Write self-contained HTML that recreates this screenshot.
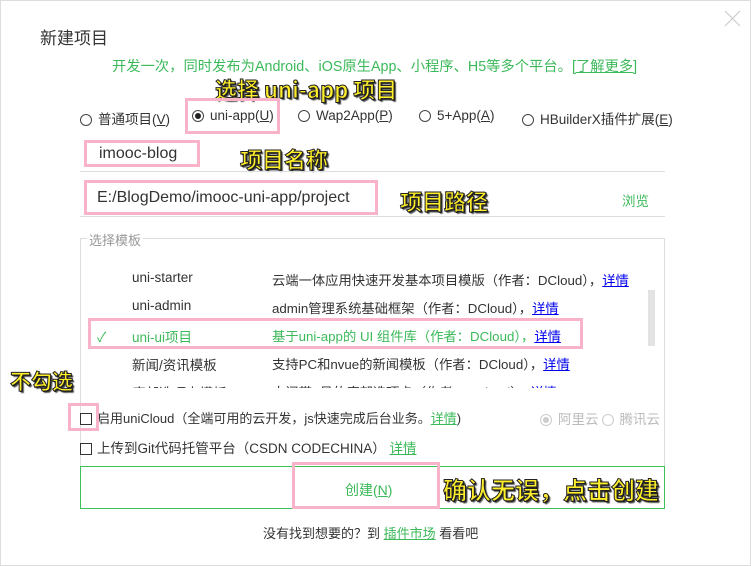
<!DOCTYPE html>
<html><head><meta charset="utf-8"><style>
*{margin:0;padding:0;box-sizing:border-box}
body{width:751px;height:566px;background:#fff;position:relative;overflow:hidden;font-family:"Liberation Sans","Noto Sans CJK SC",sans-serif;color:#333;font-size:13px}
.a{position:absolute;white-space:nowrap}
.g{color:#3cb95a}
.pk{position:absolute;border:3px solid #f9b3c8}
.y{position:absolute;white-space:nowrap;font-weight:bold;color:#ffef2a;font-family:"WenQuanYi Zen Hei","Noto Sans CJK SC",sans-serif;-webkit-text-stroke:1px #222;text-shadow:1px 1px 0 #222,2px 2px 1px #555}
.r{display:inline-block;width:12px;height:12px;border:1px solid #444;border-radius:50%;vertical-align:-2px;margin-right:6px;position:relative}
.cb{display:inline-block;width:12px;height:12px;border:1px solid #333;vertical-align:-2px;margin-right:5px}
u{text-decoration:underline}
.bl{color:#00e;text-decoration:underline}
</style></head><body>
<div style="position:absolute;inset:0;border:1px solid #ddd"></div>
<svg class="a" style="left:724px;top:10px" width="17" height="17"><path d="M1 1L16 16M16 1L1 16" stroke="#ccc" stroke-width="1.2"/></svg>
<div class="a" style="left:40px;top:24px;font-size:17px;color:#333">新建项目</div>
<div class="a g" style="left:112px;top:55px;font-size:14.3px">开发一次，同时发布为Android、iOS原生App、小程序、H5等多个平台。<u>[了解更多]</u></div>
<div class="y" style="left:215px;top:73px;font-size:22px">选择 uni-app 项目</div>
<div class="a" style="left:80px;top:108px;font-size:13.5px"><span class="r"></span>普通项目(<u>V</u>)</div>
<div class="a" style="left:192px;top:108px;font-size:13.5px"><span class="r"><span style="position:absolute;left:2px;top:2px;width:6px;height:6px;border-radius:50%;background:#222"></span></span>uni-app(<u>U</u>)</div>
<div class="a" style="left:298px;top:108px;font-size:13.5px"><span class="r"></span>Wap2App(<u>P</u>)</div>
<div class="a" style="left:419px;top:108px;font-size:13.5px"><span class="r"></span>5+App(<u>A</u>)</div>
<div class="a" style="left:522px;top:108px;font-size:13.5px"><span class="r"></span>HBuilderX插件扩展(<u>E</u>)</div>
<div class="pk" style="left:185px;top:98px;width:95px;height:36px"></div>
<div class="a" style="left:99px;top:145px;font-size:16px">imooc-blog</div>
<div class="pk" style="left:84px;top:140px;width:116px;height:27px"></div>
<div class="y" style="left:240px;top:143px;font-size:22px">项目名称</div>
<div class="a" style="left:80px;top:171px;width:585px;border-top:1px solid #ddd"></div>
<div class="a" style="left:97px;top:189px;font-size:16px">E:/BlogDemo/imooc-uni-app/project</div>
<div class="pk" style="left:84px;top:180px;width:294px;height:35px"></div>
<div class="y" style="left:400px;top:185px;font-size:22px">项目路径</div>
<div class="a g" style="left:622px;top:190px;font-size:13.5px">浏览</div>
<div class="a" style="left:80px;top:216px;width:585px;border-top:1px solid #ddd"></div>
<div class="a" style="left:80px;top:238px;width:585px;height:229px;border:1px solid #ddd"></div>
<div class="a" style="left:87px;top:230px;background:#fff;color:#999;padding:0 2px;font-size:13px">选择模板</div>
<div class="a" style="left:648px;top:290px;width:7px;height:56px;background:#e3e3e3"></div>
<div class="a" style="left:132px;top:270px;font-size:13.5px">uni-starter</div>
<div class="a" style="left:272px;top:270px;font-size:13.3px">云端一体应用快速开发基本项目模版（作者：DCloud），<span class="bl">详情</span></div>
<div class="a" style="left:132px;top:298px;font-size:13.5px">uni-admin</div>
<div class="a" style="left:272px;top:298px;font-size:13.3px">admin管理系统基础框架（作者：DCloud），<span class="bl">详情</span></div>
<div class="a g" style="left:97px;top:326px;font-size:13.5px">✓</div>
<div class="a g" style="left:132px;top:326px;font-size:13.5px">uni-ui项目</div>
<div class="a g" style="left:272px;top:326px;font-size:13.3px">基于uni-app的 UI 组件库（作者：DCloud），<span class="bl">详情</span></div>
<div class="pk" style="left:88px;top:318px;width:495px;height:31px"></div>
<div class="a" style="left:132px;top:354px;font-size:13.5px">新闻/资讯模板</div>
<div class="a" style="left:272px;top:354px;font-size:13.3px">支持PC和nvue的新闻模板（作者：DCloud），<span class="bl">详情</span></div>
<div class="a" style="left:81px;top:378px;width:583px;height:10px;overflow:hidden"><div style="position:absolute;left:51px;top:4px;font-size:13.5px;white-space:nowrap">底部选项卡模板</div><div style="position:absolute;left:191px;top:4px;font-size:13.3px;white-space:nowrap">中间带+号的底部选项卡（作者：DCloud），<span class="bl">详情</span></div></div>
<div class="y" style="left:10px;top:366px;font-size:21px">不勾选</div>
<div class="a" style="left:80px;top:408px;font-size:13px"><span class="cb"></span>启用uniCloud（全端可用的云开发，js快速完成后台业务。<u class="g">详情</u>)</div>
<div class="pk" style="left:68px;top:403px;width:31px;height:28px"></div>
<div class="a" style="left:540px;top:408px;font-size:13.5px;color:#bbb"><span class="r" style="border-color:#ccc"><span style="position:absolute;left:2px;top:2px;width:6px;height:6px;border-radius:50%;background:#ccc"></span></span>阿里云<span class="r" style="border-color:#ccc;margin-left:3px"></span>腾讯云</div>
<div class="a" style="left:80px;top:437px;font-size:13.5px"><span class="cb"></span>上传到Git代码托管平台（CSDN CODECHINA） <u class="g">详情</u></div>
<div class="a" style="left:80px;top:466px;width:585px;height:43px;border:1px solid #3cc05a"></div>
<div class="a g" style="left:345px;top:480px;font-size:14px">创建(<u>N</u>)</div>
<div class="pk" style="left:292px;top:462px;width:148px;height:47px"></div>
<div class="y" style="left:443px;top:471px;font-size:24px">确认无误，点击创建</div>
<div class="a" style="left:263px;top:523px;font-size:13px">没有找到想要的？到 <u class="g">插件市场</u> 看看吧</div>
</body></html>
